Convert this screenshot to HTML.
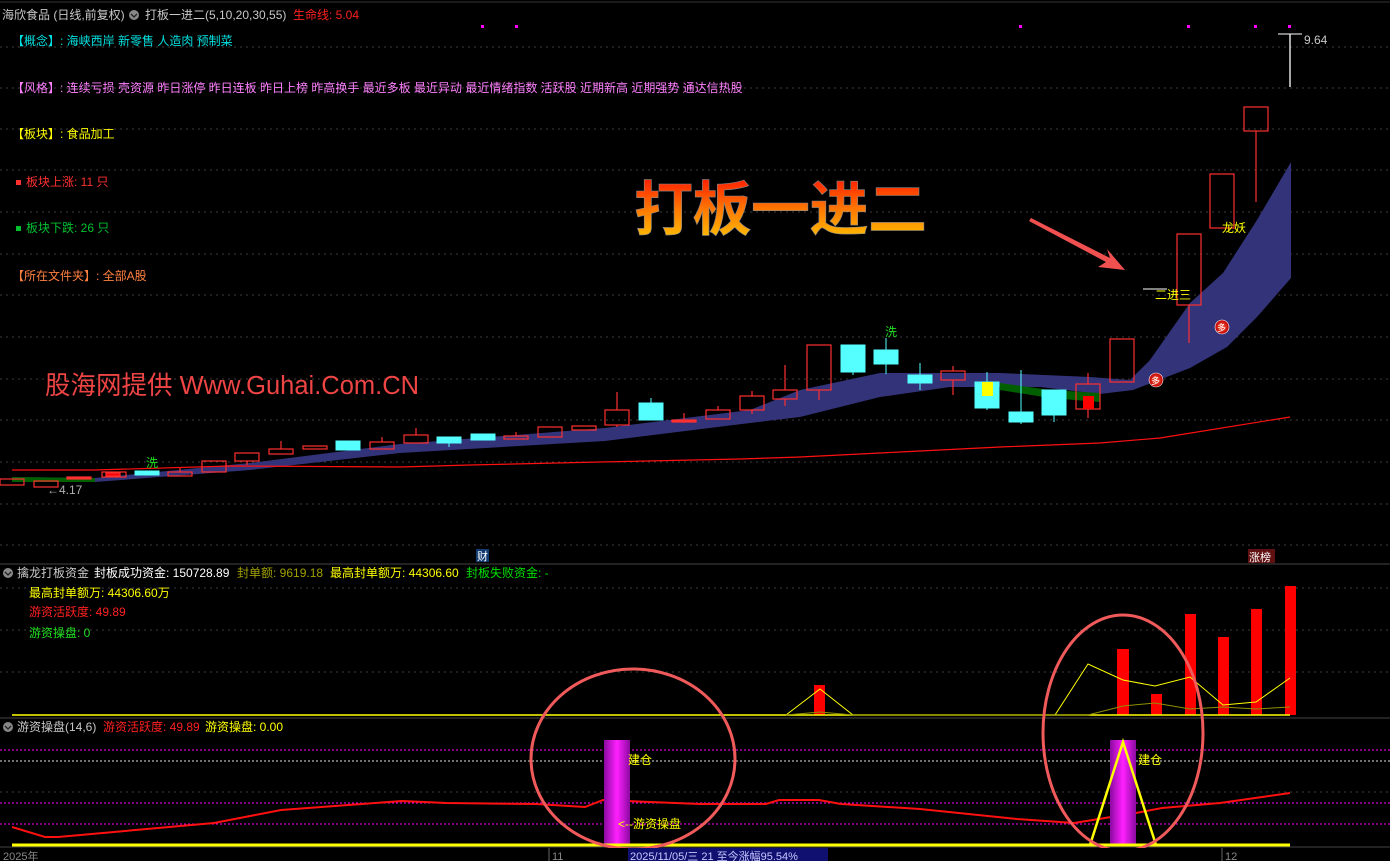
<!DOCTYPE html>
<html><head><meta charset="utf-8"><style>
html,body{margin:0;padding:0;background:#000;width:1390px;height:861px;overflow:hidden}
svg{display:block;font-family:"Liberation Sans","Noto Sans CJK SC",sans-serif}
</style></head><body>
<svg width="1390" height="861" viewBox="0 0 1390 861" xmlns="http://www.w3.org/2000/svg">
<defs>
<linearGradient id="tg" x1="0" y1="0" x2="0" y2="1"><stop offset="0" stop-color="#ff1a00"/><stop offset="0.5" stop-color="#ff7a00"/><stop offset="1" stop-color="#ffc800"/></linearGradient>
<linearGradient id="pg" x1="0" y1="0" x2="1" y2="0"><stop offset="0" stop-color="#8a0aa0"/><stop offset="0.5" stop-color="#ff20ff"/><stop offset="1" stop-color="#8a0aa0"/></linearGradient>
<radialGradient id="cg"><stop offset="0" stop-color="#ff6040"/><stop offset="1" stop-color="#c00000"/></radialGradient>
</defs>
<rect width="1390" height="861" fill="#000"/>
<line x1="0" y1="2" x2="1390" y2="2" stroke="#333"/>
<g stroke="#3c3c3c" stroke-dasharray="2,4">
<line x1="0" y1="47" x2="1390" y2="47"/><line x1="0" y1="88" x2="1390" y2="88"/><line x1="0" y1="129" x2="1390" y2="129"/><line x1="0" y1="170" x2="1390" y2="170"/><line x1="0" y1="212" x2="1390" y2="212"/><line x1="0" y1="254" x2="1390" y2="254"/><line x1="0" y1="295" x2="1390" y2="295"/><line x1="0" y1="337" x2="1390" y2="337"/><line x1="0" y1="379" x2="1390" y2="379"/><line x1="0" y1="420" x2="1390" y2="420"/><line x1="0" y1="462" x2="1390" y2="462"/><line x1="0" y1="504" x2="1390" y2="504"/><line x1="0" y1="545" x2="1390" y2="545"/>
<line x1="0" y1="588" x2="1390" y2="588"/><line x1="0" y1="630" x2="1390" y2="630"/><line x1="0" y1="672" x2="1390" y2="672"/>
<line x1="0" y1="792" x2="1390" y2="792"/>
</g>
<line x1="0" y1="564" x2="1390" y2="564" stroke="#444"/>
<line x1="0" y1="718" x2="1390" y2="718" stroke="#444"/>
<line x1="0" y1="847" x2="1390" y2="847" stroke="#444"/>

<g font-size="12">
<text x="2" y="19" fill="#c8c8c8">海欣食品 (日线,前复权)</text>
<circle cx="134" cy="15" r="5" fill="#888"/><path d="M131 14l3 3 3-3" stroke="#222" fill="none" stroke-width="1.3"/>
<text x="145" y="19" fill="#c8c8c8">打板一进二(5,10,20,30,55)</text>
<text x="293" y="19" fill="#ff2020">生命线: 5.04</text>
</g>
<g fill="#ff00ff"><rect x="481" y="25" width="3" height="3"/><rect x="515" y="25" width="3" height="3"/><rect x="1019" y="25" width="3" height="3"/><rect x="1187" y="25" width="3" height="3"/><rect x="1254" y="25" width="3" height="3"/><rect x="1288" y="25" width="3" height="3"/></g>

<g font-size="12">
<text x="12" y="45" fill="#00e0e0">【概念】: 海峡西岸 新零售 人造肉 预制菜</text>
<text x="12" y="92" fill="#ff80ff">【风格】: 连续亏损 壳资源 昨日涨停 昨日连板 昨日上榜 昨高换手 最近多板 最近异动 最近情绪指数 活跃股 近期新高 近期强势 通达信热股</text>
<text x="12" y="138" fill="#ffff00">【板块】: 食品加工</text>
<rect x="16" y="180" width="5" height="5" fill="#ff3030"/><text x="26" y="186" fill="#ff3030">板块上涨:  11 只</text>
<rect x="16" y="226" width="5" height="5" fill="#00c030"/><text x="26" y="232" fill="#00c030">板块下跌:  26 只</text>
<text x="12" y="280" fill="#ff8040">【所在文件夹】: 全部A股</text>
</g>
<text x="45" y="394" font-size="25.5" fill="#ee4444">股海网提供 Www.Guhai.Com.CN</text>

<text x="634" y="230" font-size="59" font-weight="bold" fill="url(#tg)" stroke="#888" stroke-width="0.6" letter-spacing="-0.5">打板一进二</text>

<path d="M12 477 L95 478 L250 463 L400 444 L605 428 L750 410 L800 390 L880 373 L1000 373 L1090 377 L1130 380 L1150 360 L1190 303 L1223 273 L1257 220 L1291 162 L1291 278 L1257 317 L1227 347 L1190 368 L1133 390 L1100 394 L1040 387 L950 387 L880 397 L800 417 L750 423 L605 441 L400 453 L250 470 L95 482 L12 482 Z" fill="#33337a"/>
<path d="M12 477 L95 478 L95 482 L12 482Z" fill="#006000"/>
<path d="M1000 383 L1050 390 L1100 393 L1100 402 L1050 398 L1000 390Z" fill="#006000"/>
<polyline points="12,470 95,470 230,466 400,467 470,465 600,462 740,459 800,457 900,452 1000,447 1100,443 1160,438 1290,417" fill="none" stroke="#ff1010" stroke-width="1.2"/>

<g stroke="#ff3030" fill="none" stroke-width="1.2">
<rect x="0" y="479" width="24" height="6"/><rect x="34" y="481" width="24" height="6"/>
<rect x="67" y="477" width="24" height="2" fill="#ff3030"/>
<rect x="102" y="472" width="24" height="5"/><rect x="106" y="473" width="14" height="3" fill="#ff0000"/>
<rect x="168" y="472" width="24" height="4"/><line x1="180" y1="468" x2="180" y2="472"/>
<rect x="202" y="461" width="24" height="11"/>
<rect x="235" y="453" width="24" height="8"/><line x1="247" y1="461" x2="247" y2="465"/>
<rect x="269" y="449" width="24" height="5"/><line x1="281" y1="441" x2="281" y2="449"/>
<rect x="303" y="446" width="24" height="3"/>
<rect x="370" y="442" width="24" height="7"/><line x1="382" y1="437" x2="382" y2="442"/>
<rect x="404" y="435" width="24" height="8"/><line x1="416" y1="428" x2="416" y2="435"/>
<rect x="504" y="436" width="24" height="3"/><line x1="516" y1="432" x2="516" y2="436"/>
<rect x="538" y="427" width="24" height="10"/>
<rect x="572" y="426" width="24" height="4"/>
<rect x="605" y="410" width="24" height="15"/><line x1="617" y1="392" x2="617" y2="410"/><line x1="617" y1="425" x2="617" y2="427"/>
<rect x="672" y="420" width="24" height="2" fill="#ff3030"/><line x1="684" y1="413" x2="684" y2="423"/>
<rect x="706" y="410" width="24" height="9"/><line x1="718" y1="406" x2="718" y2="410"/>
<rect x="740" y="396" width="24" height="14"/><line x1="752" y1="391" x2="752" y2="396"/><line x1="752" y1="410" x2="752" y2="414"/>
<rect x="773" y="390" width="24" height="9"/><line x1="785" y1="365" x2="785" y2="390"/><line x1="785" y1="399" x2="785" y2="406"/>
<rect x="807" y="345" width="24" height="45"/><line x1="819" y1="390" x2="819" y2="400"/>
<rect x="941" y="371" width="24" height="9"/><line x1="953" y1="366" x2="953" y2="371"/><line x1="953" y1="380" x2="953" y2="395"/>
<rect x="1076" y="384" width="24" height="25"/><line x1="1088" y1="373" x2="1088" y2="384"/><line x1="1088" y1="409" x2="1088" y2="418"/>
<rect x="1110" y="339" width="24" height="43"/>
<rect x="1177" y="234" width="24" height="71"/><line x1="1189" y1="305" x2="1189" y2="343"/>
<rect x="1210" y="174" width="24" height="54"/>
<rect x="1244" y="107" width="24" height="24"/><line x1="1256" y1="131" x2="1256" y2="202"/>
</g>
<rect x="1083" y="396" width="11" height="13" fill="#ff0000"/>
<g fill="#55ffff" stroke="#55ffff">
<rect x="135" y="471" width="24" height="4"/>
<rect x="336" y="441" width="24" height="9"/>
<rect x="437" y="437" width="24" height="6"/><line x1="449" y1="443" x2="449" y2="447"/>
<rect x="471" y="434" width="24" height="6"/>
<rect x="639" y="403" width="24" height="17"/><line x1="651" y1="398" x2="651" y2="403"/>
<rect x="841" y="345" width="24" height="27"/><line x1="853" y1="372" x2="853" y2="375"/>
<rect x="874" y="350" width="24" height="14"/><line x1="886" y1="338" x2="886" y2="374"/>
<rect x="908" y="375" width="24" height="8"/><line x1="920" y1="363" x2="920" y2="390"/>
<rect x="975" y="382" width="24" height="26"/><line x1="987" y1="372" x2="987" y2="410"/>
<rect x="1009" y="412" width="24" height="10"/><line x1="1021" y1="370" x2="1021" y2="424"/>
<rect x="1042" y="390" width="24" height="25"/><line x1="1054" y1="415" x2="1054" y2="422"/>
</g>
<rect x="982" y="382" width="11" height="14" fill="#ffff00"/>
<text x="146" y="467" font-size="12" fill="#20e020">洗</text>
<text x="885" y="336" font-size="12" fill="#20e020">洗</text>
<text x="47" y="494" font-size="12" fill="#b0b0b0">←4.17</text>
<line x1="1278" y1="34" x2="1302" y2="34" stroke="#fff"/><line x1="1290" y1="34" x2="1290" y2="87" stroke="#fff" stroke-width="1.3"/>
<text x="1304" y="44" font-size="12" fill="#c8c8c8">9.64</text>
<line x1="1143" y1="289" x2="1167" y2="289" stroke="#fff"/>
<text x="1155" y="299" font-size="12" fill="#ffff00">二进三</text>
<text x="1222" y="232" font-size="12" fill="#ffff00">龙妖</text>
<circle cx="1156" cy="380" r="7" fill="url(#cg)" stroke="#fff" stroke-width="0.6"/><text x="1151" y="384" font-size="9" fill="#fff">多</text>
<circle cx="1222" cy="327" r="7" fill="url(#cg)" stroke="#fff" stroke-width="0.6"/><text x="1217" y="331" font-size="9" fill="#fff">多</text>
<path d="M1031 218 L1110 258 L1107 249 L1125 270 L1098 267 L1106 262 L1029 221 Z" fill="#f05050"/>

<rect x="476" y="549" width="13" height="13" fill="#103a70"/><text x="477" y="560" font-size="11" fill="#fff">财</text>
<rect x="1248" y="549" width="27" height="14" fill="#601010"/><text x="1249" y="561" font-size="11" fill="#fff">涨榜</text>

<g font-size="12">
<circle cx="8" cy="573" r="5" fill="#888"/><path d="M5 572l3 3 3-3" stroke="#222" fill="none" stroke-width="1.3"/>
<text x="17" y="577" fill="#c8c8c8">擒龙打板资金</text>
<text x="94" y="577" fill="#fff">封板成功资金: 150728.89</text>
<text x="237" y="577" fill="#a0a000">封单额: 9619.18</text>
<text x="330" y="577" fill="#ffff00">最高封单额万: 44306.60</text>
<text x="466" y="577" fill="#00e000">封板失败资金: -</text>
<text x="29" y="597" fill="#ffff00">最高封单额万: 44306.60万</text>
<text x="29" y="616" fill="#ff2020">游资活跃度: 49.89</text>
<text x="29" y="637" fill="#20e020">游资操盘: 0</text>
</g>
<g fill="#ff0000">
<rect x="814" y="685" width="11" height="30"/><rect x="1117" y="649" width="12" height="66"/><rect x="1151" y="694" width="11" height="21"/><rect x="1185" y="614" width="11" height="101"/><rect x="1218" y="637" width="11" height="78"/><rect x="1251" y="609" width="11" height="106"/><rect x="1285" y="586" width="11" height="129"/>
</g>
<line x1="12" y1="715" x2="1290" y2="715" stroke="#ffff00" stroke-width="1.5"/>
<polyline points="786,715 820,689 853,715 1055,715 1088,664 1123,680 1155,686 1190,677 1223,705 1256,702 1290,678" fill="none" stroke="#ffff00"/>
<polyline points="786,715 820,712 853,715 1088,715 1123,706 1155,703 1190,709 1223,707 1256,709 1290,707" fill="none" stroke="#909000"/>

<g font-size="12">
<circle cx="8" cy="727" r="5" fill="#888"/><path d="M5 726l3 3 3-3" stroke="#222" fill="none" stroke-width="1.3"/>
<text x="17" y="731" fill="#c8c8c8">游资操盘(14,6)</text>
<text x="103" y="731" fill="#ff2020">游资活跃度: 49.89</text>
<text x="205" y="731" fill="#ffff00">游资操盘: 0.00</text>
</g>
<g stroke-dasharray="2,2">
<line x1="0" y1="750" x2="1390" y2="750" stroke="#ff00ff"/>
<line x1="0" y1="761" x2="1390" y2="761" stroke="#e0e0e0"/>
<line x1="0" y1="803" x2="1390" y2="803" stroke="#ff00ff"/>
<line x1="0" y1="824" x2="1390" y2="824" stroke="#ff00ff"/>
</g>
<polyline points="12,827 45,837 58,837 214,823 281,810 402,801 446,803 536,804 585,807 603,800 700,804 766,804 779,800 819,800 841,804 920,809 1017,819 1074,823 1136,813 1162,808 1220,803 1290,793" fill="none" stroke="#ff1010" stroke-width="2"/>
<rect x="604" y="740" width="26" height="105" fill="url(#pg)"/>
<rect x="1110" y="740" width="26" height="105" fill="url(#pg)"/>
<polyline points="1090,845 1123,742 1156,845" fill="none" stroke="#ffff00" stroke-width="2.5"/>
<line x1="12" y1="845" x2="1290" y2="845" stroke="#ffff00" stroke-width="3"/>
<g font-size="12" fill="#ffff00">
<text x="628" y="764">建仓</text><text x="1138" y="764">建仓</text><text x="618" y="828">&lt;--游资操盘</text>
</g>
<ellipse cx="633" cy="759" rx="102" ry="90" fill="none" stroke="#f05a5a" stroke-width="3"/>
<ellipse cx="1123" cy="733" rx="80" ry="118" fill="none" stroke="#f05a5a" stroke-width="3"/>

<rect x="0" y="848" width="1390" height="13" fill="#000"/>
<g font-size="11" fill="#888">
<text x="3" y="860">2025年</text>
<line x1="549" y1="848" x2="549" y2="861" stroke="#666"/><text x="552" y="860">11</text>
<line x1="1222" y1="848" x2="1222" y2="861" stroke="#666"/><text x="1225" y="860">12</text>
</g>
<rect x="628" y="848" width="200" height="13" fill="#101070"/>
<text x="630" y="860" font-size="11" fill="#c8c8ff">2025/11/05/三 21 至今涨幅95.54%</text>
</svg>
</body></html>
